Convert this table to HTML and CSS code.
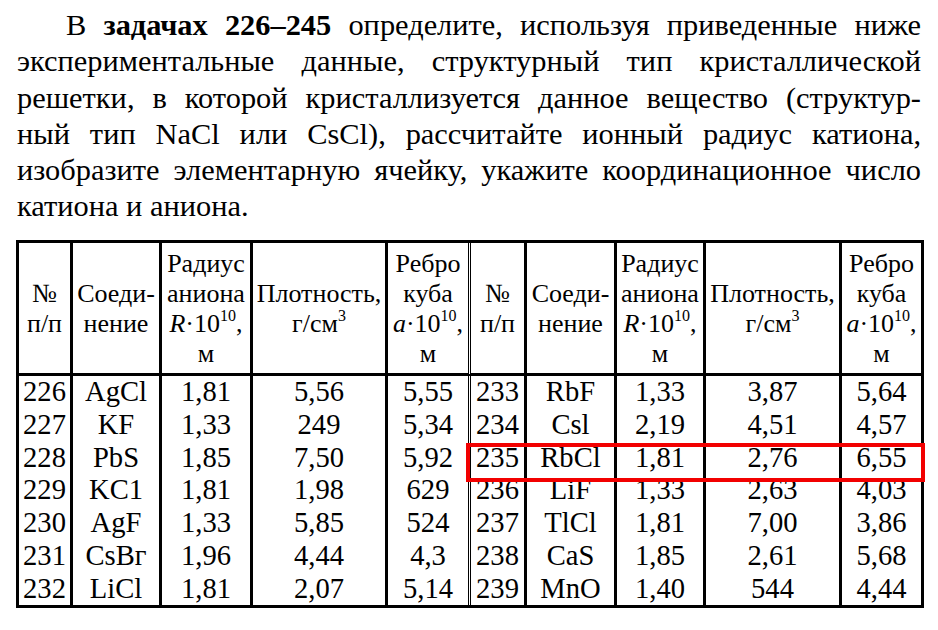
FILE: index.html
```html
<!DOCTYPE html>
<html lang="ru">
<head>
<meta charset="utf-8">
<title>Задачи 226–245</title>
<link rel="stylesheet" href="styles.css">
</head>
<body>
<div class="page">
  <p class="intro">
    <span class="line first">В <b>задачах 226–245</b> определите, используя приведенные ниже</span>
    <span class="line">экспериментальные данные, структурный тип кристаллической</span>
    <span class="line">решетки, в которой кристаллизуется данное вещество (структур-</span>
    <span class="line">ный тип NaCl или CsCl), рассчитайте ионный радиус катиона,</span>
    <span class="line">изобразите элементарную ячейку, укажите координационное число</span>
    <span class="line last">катиона и аниона.</span>
  </p>
  <div class="table-wrap">
    <table class="data">
      <colgroup>
        <col class="c-num">
        <col class="c-comp">
        <col class="c-rad">
        <col class="c-dens">
        <col class="c-edge">
        <col class="c-num2">
        <col class="c-comp2">
        <col class="c-rad2">
        <col class="c-dens2">
        <col class="c-edge2">
      </colgroup>
      <thead>
        <tr>
          <th class="first-col">№<br>п/п</th>
          <th>Соеди-<br>нение</th>
          <th>Радиус<br>аниона<br><i>R</i>·10<sup>10</sup>,<br>м</th>
          <th>Плотность,<br>г/см<sup>3</sup></th>
          <th>Ребро<br>куба<br><i>a</i>·10<sup>10</sup>,<br>м</th>
          <th class="split">№<br>п/п</th>
          <th>Соеди-<br>нение</th>
          <th>Радиус<br>аниона<br><i>R</i>·10<sup>10</sup>,<br>м</th>
          <th>Плотность,<br>г/см<sup>3</sup></th>
          <th>Ребро<br>куба<br><i>a</i>·10<sup>10</sup>,<br>м</th>
        </tr>
      </thead>
      <tbody>
        <tr><td class="first-col">226</td><td>AgCl</td><td>1,81</td><td>5,56</td><td>5,55</td><td class="split">233</td><td>RbF</td><td>1,33</td><td>3,87</td><td>5,64</td></tr>
        <tr><td class="first-col">227</td><td>KF</td><td>1,33</td><td>249</td><td>5,34</td><td class="split">234</td><td>Csl</td><td>2,19</td><td>4,51</td><td>4,57</td></tr>
        <tr><td class="first-col">228</td><td>PbS</td><td>1,85</td><td>7,50</td><td>5,92</td><td class="split">235</td><td>RbCl</td><td>1,81</td><td>2,76</td><td>6,55</td></tr>
        <tr><td class="first-col">229</td><td>KC1</td><td>1,81</td><td>1,98</td><td>629</td><td class="split">236</td><td>LiF</td><td>1,33</td><td>2,63</td><td>4,03</td></tr>
        <tr><td class="first-col">230</td><td>AgF</td><td>1,33</td><td>5,85</td><td>524</td><td class="split">237</td><td>TlCl</td><td>1,81</td><td>7,00</td><td>3,86</td></tr>
        <tr><td class="first-col">231</td><td>CsBг</td><td>1,96</td><td>4,44</td><td>4,3</td><td class="split">238</td><td>CaS</td><td>1,85</td><td>2,61</td><td>5,68</td></tr>
        <tr><td class="first-col">232</td><td>LiCl</td><td>1,81</td><td>2,07</td><td>5,14</td><td class="split">239</td><td>MnO</td><td>1,40</td><td>544</td><td>4,44</td></tr>
      </tbody>
    </table>
    <div class="highlight" aria-hidden="true"></div>
  </div>
</div>
</body>
</html>
```

FILE: styles.css
```css
html, body {
  margin: 0;
  padding: 0;
  background: #ffffff;
}

body {
  font-family: "Liberation Serif", "Times New Roman", serif;
  color: #000000;
}

.page {
  padding-top: 7px;
}

.intro {
  margin: 0 0 0 17px;
  width: 904px;
  font-size: 30.4px;
  line-height: 36.3px;
}

.line {
  display: block;
  text-align: justify;
  text-align-last: justify;
  white-space: nowrap;
}

.line.first {
  text-indent: 49px;
}

.line.last {
  text-align-last: left;
}

.table-wrap {
  position: relative;
  margin: 15.5px 0 0 16px;
  width: 908px;
}

.data {
  table-layout: fixed;
  width: 908px;
  border-collapse: separate;
  border-spacing: 0;
  border: 3px solid #000;
}

.c-num { width: 51px; }
.c-comp { width: 89px; }
.c-rad { width: 91px; }
.c-dens { width: 135px; }
.c-edge { width: 83px; }
.c-num2 { width: 56px; }
.c-comp2 { width: 90px; }
.c-rad2 { width: 89px; }
.c-dens2 { width: 136px; }
.c-edge2 { width: 82px; }

.data th,
.data td {
  padding: 0;
  text-align: center;
  border-left: 3px solid #000;
  white-space: nowrap;
}

.data th.first-col,
.data td.first-col {
  border-left: none;
}

.data th.split,
.data td.split {
  border-left: 3px double #000;
}

.data th {
  font-weight: normal;
  font-size: 26px;
  line-height: 30px;
  padding: 6px 0 4px;
  vertical-align: middle;
  border-bottom: 3px solid #000;
}

.data td {
  font-size: 28.6px;
  line-height: 32.7px;
  vertical-align: middle;
}

.data sup {
  font-size: 16px;
  line-height: 0;
  vertical-align: 11px;
}

.data i {
  font-style: italic;
}

.highlight {
  position: absolute;
  left: 450px;
  top: 203px;
  width: 459px;
  height: 39px;
  box-sizing: border-box;
  border: 4px solid #f20000;
}
```
